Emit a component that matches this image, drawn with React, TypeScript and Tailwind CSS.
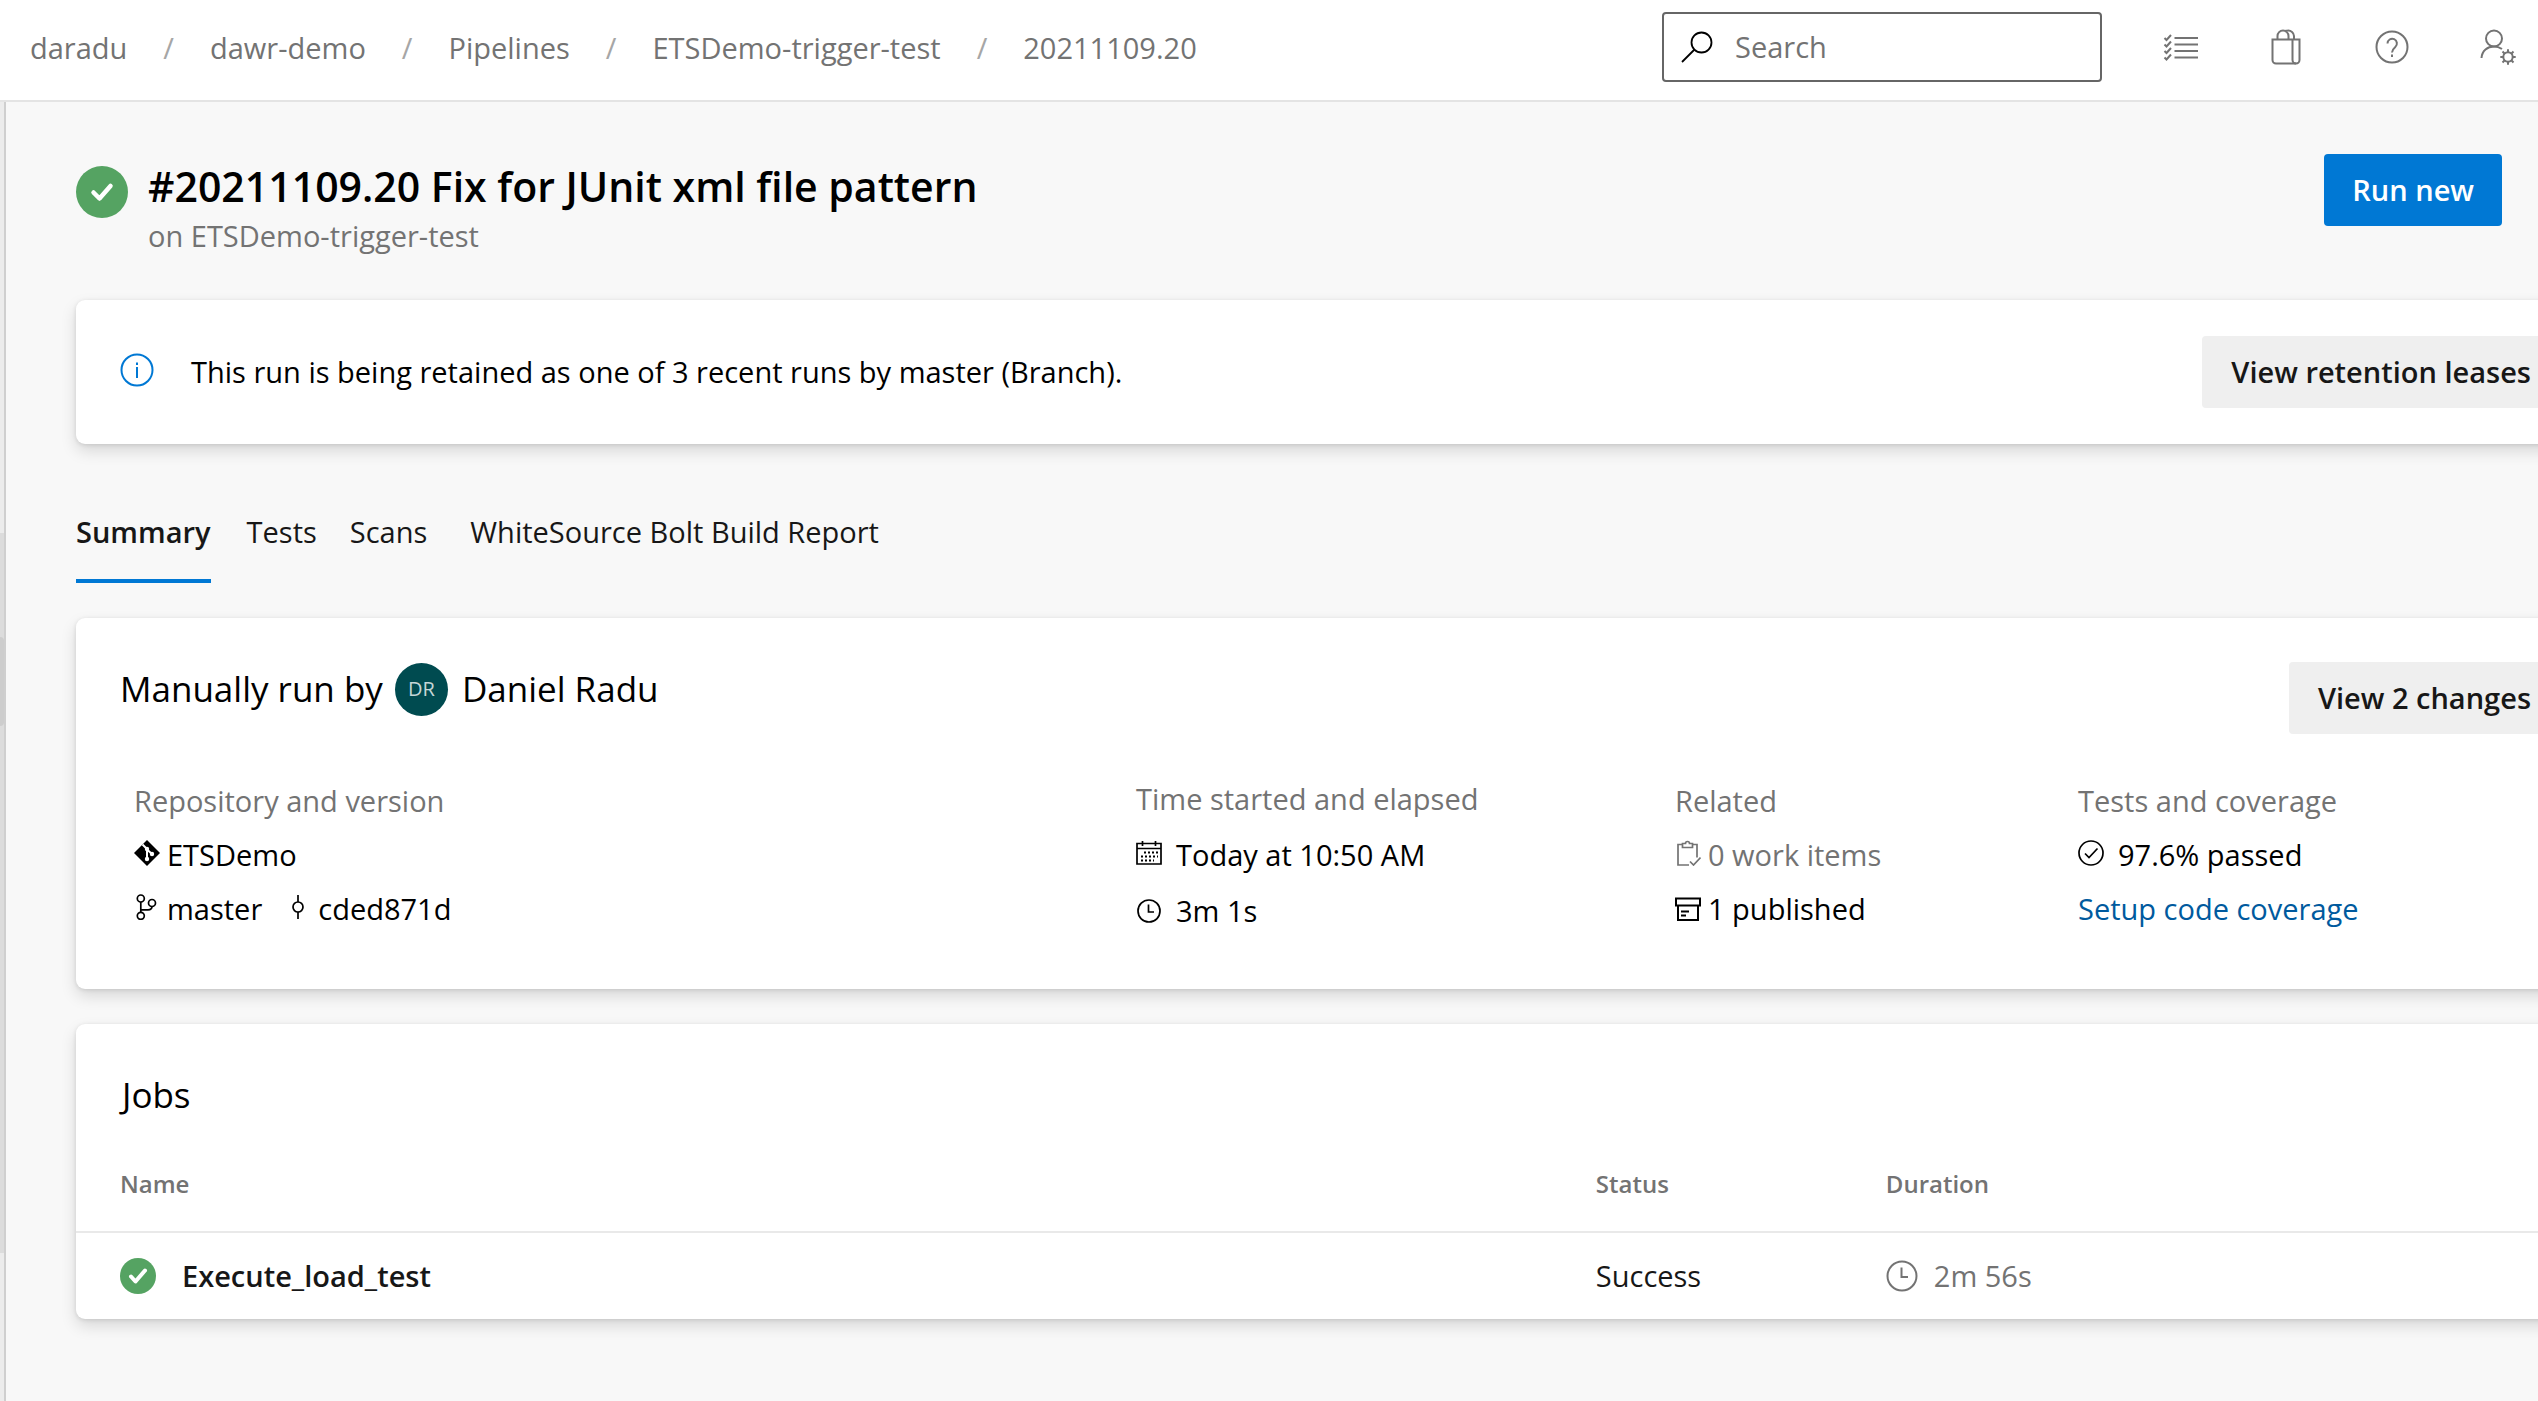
import type { ReactNode } from "react";

type IconProps = { className?: string; size?: number; children: ReactNode; stroke?: number };

function Svg({ className = "", size = 26, stroke = 2, children }: IconProps) {
  return (
    <svg
      aria-hidden="true"
      className={`shrink-0 ${className}`}
      width={size}
      height={size}
      viewBox={`0 0 ${size} ${size}`}
      fill="none"
      stroke="currentColor"
      strokeWidth={stroke}
    >
      {children}
    </svg>
  );
}

const SearchIcon = () => (
  <Svg size={32} className="text-black" stroke={1.8}>
    <circle cx="20.5" cy="11.5" r="10" />
    <path d="M13.5 18.5 1 31" />
  </Svg>
);

const TaskListIcon = () => (
  <Svg size={36}>
    <path d="M12.500 9h24M12.500 15.500h24M12.500 22h24M12.500 28.500h24" />
    <path d="m2.500 9 2 2 4.500-5M2.500 15.500l2 2 4.500-5M2.500 22l2 2 4.500-5M2.500 28.500l2 2 4.500-5" />
  </Svg>
);

const BagIcon = () => (
  <Svg size={36}>
    <path d="M4.500 10.500h27V31a3.500 3.500 0 0 1-3.500 3.500H8A3.500 3.500 0 0 1 4.500 31z" />
    <path d="M24.500 10.500V31a3.500 3.500 0 0 0 3.500 3.500" />
    <path d="M9.500 10.500V7a5.500 5.500 0 0 1 11 0v3.500M16.500 2.500c1-.7 2-1 3.200-1A5.800 5.800 0 0 1 26 7v3.500" />
  </Svg>
);

const HelpIcon = () => (
  <Svg size={36}>
    <circle cx="18" cy="18" r="15.500" />
    <path d="M13.500 14.500a4.700 4.700 0 1 1 7.800 3.500c-2 1.700-3.300 2.700-3.300 5.500" />
    <path d="M18 25.500v2.500" />
  </Svg>
);

const UserSettingsIcon = () => (
  <Svg size={36}>
    <circle cx="14" cy="9.500" r="8" />
    <path d="M1.500 29C2 21.500 7.500 17.500 14 17.500c3 0 5.500.8 8 2.500" />
    <circle cx="28" cy="28" r="4.700" />
    <path d="M28 23.300v-3M28 35.700v-3M23.300 28h-3M35.700 28h-3M24.700 24.700l-2.200-2.200M33.500 33.500l-2.200-2.200M24.700 31.300l-2.200 2.200M33.500 22.500l-2.200 2.200" />
  </Svg>
);

const InfoIcon = () => (
  <Svg size={34} className="mb-1 text-[#0078d4]">
    <circle cx="17" cy="17" r="15.500" />
    <path d="M17 14v11M17 9.500V12" />
  </Svg>
);

const SuccessIcon = ({ className }: { className: string }) => (
  <svg role="img" aria-label="Success" className={`shrink-0 ${className}`} viewBox="0 0 52 52" fill="none">
    <circle cx="26" cy="26" r="26" fill="#55a362" />
    <path d="m17.500 26.500 6 6 11-12.500" stroke="#fff" strokeWidth="4.500" strokeLinecap="round" strokeLinejoin="round" />
  </svg>
);

const SmallSuccessIcon = () => (
  <svg role="img" aria-label="Success" className="size-9 shrink-0" viewBox="0 0 36 36" fill="none">
    <circle cx="18" cy="18" r="18" fill="#55a362" />
    <path d="m11 18.500 4.500 5 9.500-11" stroke="#fff" strokeWidth="4" strokeLinecap="round" strokeLinejoin="round" />
  </svg>
);

const GitIcon = () => (
  <Svg className="mb-1">
    <path d="M13 0 26 13 13 26 0 13z" fill="currentColor" stroke="none" />
    <path d="M8.500 4.500 13 9v10M13 9.500l5 4.500" stroke="#fff" />
    <circle cx="13" cy="9" r="2.200" fill="#fff" stroke="none" />
    <circle cx="13" cy="19" r="2.200" fill="#fff" stroke="none" />
    <circle cx="18" cy="14" r="2.200" fill="#fff" stroke="none" />
  </Svg>
);

const BranchIcon = () => (
  <Svg className="mb-1" stroke={1.7}>
    <circle cx="6.800" cy="4.500" r="3.500" />
    <circle cx="6.800" cy="21.800" r="3.500" />
    <circle cx="18" cy="9" r="3.500" />
    <path d="M6.800 8v10.300M18 12.500c0 2.500-1.500 3.300-4 3.300H6.800" />
  </Svg>
);

const CommitIcon = () => (
  <Svg className="mb-1" stroke={1.7}>
    <circle cx="13" cy="13" r="5" />
    <path d="M13 1v7M13 18v7" />
  </Svg>
);

const CalendarIcon = () => (
  <Svg className="mb-1" stroke={1.7}>
    <path d="M1 3.500h24V24H1zM1 8.500h24M6.500 1v5M19.500 1v5" />
    <path d="M8 12.500h14M5 16.500h17M5 20.500h13" strokeDasharray="2 2" strokeWidth="2" />
  </Svg>
);

const ClockIcon = () => (
  <Svg stroke={1.7}>
    <circle cx="13" cy="13" r="11" />
    <path d="M12.500 6.500V14H18" />
  </Svg>
);

const LargeClockIcon = () => (
  <Svg size={32}>
    <circle cx="16" cy="16" r="14.500" />
    <path d="M15.500 7.500v9.500H22" />
  </Svg>
);

const WorkItemIcon = () => (
  <Svg className="mb-1" stroke={1.7}>
    <path d="M7.500 4.500H3V25h11M17.500 4.500H22v13" />
    <path d="M7.500 7.500v-4h3a2 2 0 0 1 4 0h3v4z" />
    <path d="m15 21.500 3.500 3.500 7-7.500" />
  </Svg>
);

const ArtifactIcon = () => (
  <Svg>
    <path d="M1 2.500h24v7H1zM3 9.500v14.500h20V9.500M6 15.500h8M6 19.500h5" />
  </Svg>
);

const PassedIcon = () => (
  <Svg className="mb-1" stroke={1.7}>
    <circle cx="13" cy="13" r="12" />
    <path d="m7 13.500 4 4 8.500-9" />
  </Svg>
);

const crumbs = ["daradu", "dawr-demo", "Pipelines", "ETSDemo-trigger-test", "20211109.20"];

const tools = [
  { label: "Work items", icon: <TaskListIcon /> },
  { label: "Marketplace", icon: <BagIcon /> },
  { label: "Help", icon: <HelpIcon /> },
  { label: "User settings", icon: <UserSettingsIcon /> },
];

const card = "-mr-[66px] rounded-[9px] bg-white shadow-[0_7px_16px_rgba(0,0,0,0.132),0_1px_4px_rgba(0,0,0,0.108)]";
const grayButton = "h-18 shrink-0 rounded-[4px] bg-[#efefef] px-[29px] font-semibold whitespace-nowrap text-[#171717]";

function Line({ tall = false, gap = "gap-[7px]", className = "", children }: { tall?: boolean; gap?: string; className?: string; children: ReactNode }) {
  return <div className={`flex items-center whitespace-nowrap ${tall ? "h-14" : "h-[54px]"} ${gap} ${className}`}>{children}</div>;
}

export default function App() {
  return (
    <div className="flex min-h-screen flex-col overflow-hidden bg-[#f8f8f8] font-['Open_Sans','Noto_Sans',sans-serif] text-[29px] leading-10 text-black">
      <header className="flex h-[102px] items-start justify-between border-b-2 border-[#e4e4e4] bg-white pt-3 pr-[22px] pl-[30px] text-[#737373]">
        <nav aria-label="Breadcrumb" className="flex h-18 items-center">
          <ol className="flex items-center gap-9">
            {crumbs.map((name, i) => (
              <li key={name} className="flex items-center gap-9 whitespace-nowrap">
                {i > 0 && <span className="text-[#a6a6a6]">/</span>}
                <a href="#">{name}</a>
              </li>
            ))}
          </ol>
        </nav>
        <div className="flex h-[70px] items-center gap-[60px]">
          <label className="flex h-[70px] w-[440px] items-center gap-[22px] rounded-[4px] border-2 border-[#666] pl-[17px]">
            <SearchIcon />
            <input type="search" aria-label="Search" placeholder="Search" className="min-w-0 flex-1 outline-none placeholder:text-[#737373]" />
          </label>
          <div className="flex gap-[70px]">
            {tools.map((t) => (
              <button key={t.label} type="button" aria-label={t.label}>
                {t.icon}
              </button>
            ))}
          </div>
        </div>
      </header>

      <div className="flex flex-1">
        <div className="flex w-1.5 shrink-0 flex-col border-r-2 border-[#cfcfcf] bg-[#ececec]">
          <div className="flex-[431]" />
          <div className="flex flex-[720] flex-col bg-[#dcdcdc]">
            <div className="flex-[104]" />
            <div className="flex-[89] rounded-r-[4px] bg-[#cdcdcd]" />
            <div className="flex-[527]" />
          </div>
          <div className="flex-[148]" />
        </div>

        <main className="min-w-0 flex-1 pt-[52px] pl-[70px]">
          <div className="flex items-start gap-5 pr-9">
            <SuccessIcon className="mt-3 size-[52px]" />
            <div className="flex-1 pt-0.5">
              <h1 className="text-[41px] leading-[60px] font-semibold">#20211109.20 Fix for JUnit xml file pattern</h1>
              <p className="text-[#737373]">on ETSDemo-trigger-test</p>
            </div>
            <button type="button" className="h-18 rounded-[4px] bg-[#0078d4] px-7 font-semibold text-white">
              Run new
            </button>
          </div>

          <section className={`mt-[44px] flex items-center px-11 py-9 ${card}`}>
            <InfoIcon />
            <p className="ml-[37px] flex-1">This run is being retained as one of 3 recent runs by master (Branch).</p>
            <button type="button" className={grayButton}>
              View retention leases
            </button>
          </section>

          <nav aria-label="Run details" className="mt-[66px] flex leading-11 text-[#171717]">
            <a href="#" aria-current="page" className="border-b-4 border-[#0078d4] pb-[25px] font-semibold">
              Summary
            </a>
            <a href="#" className="ml-9">Tests</a>
            <a href="#" className="ml-[33px]">Scans</a>
            <a href="#" className="ml-[43px]">WhiteSource Bolt Build Report</a>
          </nav>

          <section className={`mt-[35px] px-11 pt-11 pb-[50px] ${card}`}>
            <div className="flex items-start justify-between">
              <h2 className="flex h-[54px] items-center text-[35px] leading-12">
                Manually run by
                <span className="mr-3.5 ml-3 flex size-[53px] items-center justify-center rounded-full bg-[#004b50] text-[20px] text-[#c5d6d7]">
                  DR
                </span>
                Daniel Radu
              </h2>
              <button type="button" className={grayButton}>
                View 2 changes
              </button>
            </div>
            <div className="mt-[37px] grid grid-cols-[1002fr_539fr_403fr_482fr] items-center pl-3.5">
              <div>
                <Line className="text-[#737373]">Repository and version</Line>
                <Line>
                  <GitIcon />
                  <a href="#">ETSDemo</a>
                </Line>
                <Line>
                  <BranchIcon />
                  <a href="#">master</a>
                  <span className="ml-4 flex items-center gap-[7px]">
                    <CommitIcon />
                    <a href="#">cded871d</a>
                  </span>
                </Line>
              </div>
              <div>
                <Line tall className="text-[#737373]">Time started and elapsed</Line>
                <Line tall gap="gap-3.5">
                  <CalendarIcon />
                  Today at 10:50 AM
                </Line>
                <Line tall gap="gap-3.5">
                  <ClockIcon />
                  3m 1s
                </Line>
              </div>
              <div>
                <Line className="text-[#737373]">Related</Line>
                <Line className="text-[#737373]">
                  <WorkItemIcon />
                  0 work items
                </Line>
                <Line>
                  <ArtifactIcon />
                  <a href="#">1 published</a>
                </Line>
              </div>
              <div>
                <Line className="text-[#737373]">Tests and coverage</Line>
                <Line gap="gap-3.5">
                  <PassedIcon />
                  <a href="#">97.6% passed</a>
                </Line>
                <Line>
                  <a href="#" className="text-[#005a9e]">Setup code coverage</a>
                </Line>
              </div>
            </div>
          </section>

          <section className={`mt-[35px] pt-[47px] ${card}`}>
            <h2 id="jobs" className="px-[46px] text-[35px] leading-12">Jobs</h2>
            <table aria-labelledby="jobs" className="w-full table-fixed text-left">
              <thead className="text-[24px] leading-8 text-[#737373]">
                <tr className="border-b-2 border-[#e9e9e9]">
                  <th className="w-[60%] pt-[49px] pb-[31px] pl-11 font-semibold">Name</th>
                  <th className="w-[290px] pt-[49px] pb-[31px] pl-[3px] font-semibold">Status</th>
                  <th className="pt-[49px] pb-[31px] pl-[3px] font-semibold">Duration</th>
                </tr>
              </thead>
              <tbody>
                <tr className="h-[87px] text-[#171717]">
                  <td className="pl-11">
                    <div className="flex items-center gap-[26px] font-semibold">
                      <SmallSuccessIcon />
                      <a href="#">Execute_load_test</a>
                    </div>
                  </td>
                  <td className="pl-[3px]">Success</td>
                  <td className="pl-[3px]">
                    <div className="flex items-center gap-4 text-[#737373]">
                      <LargeClockIcon />
                      2m 56s
                    </div>
                  </td>
                </tr>
              </tbody>
            </table>
          </section>
        </main>
      </div>
    </div>
  );
}
